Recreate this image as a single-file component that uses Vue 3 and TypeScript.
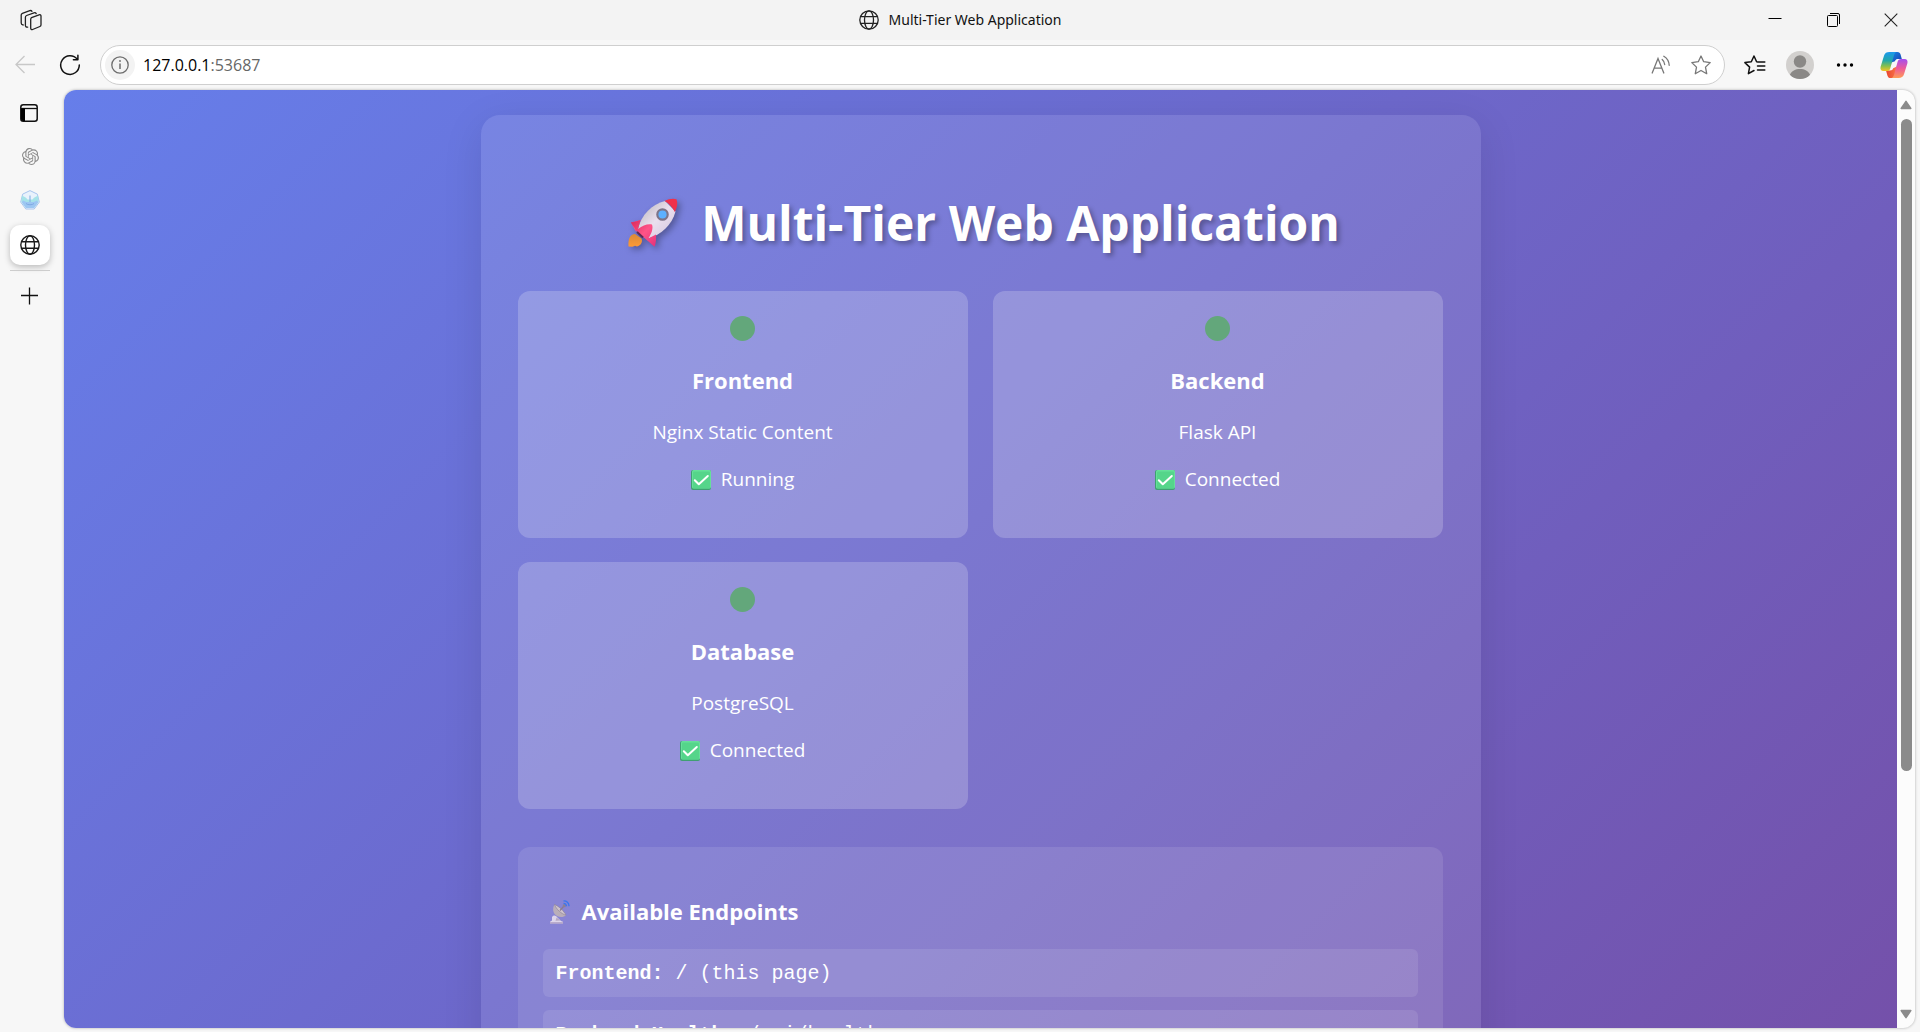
<script setup lang="ts">
interface Service {
  name: string
  tech: string
  status: string
}

interface Endpoint {
  label: string
  path: string
}

const title = 'Multi-Tier Web Application'

const services: Service[] = [
  { name: 'Frontend', tech: 'Nginx Static Content', status: 'Running' },
  { name: 'Backend', tech: 'Flask API', status: 'Connected' },
  { name: 'Database', tech: 'PostgreSQL', status: 'Connected' },
]

const endpoints: Endpoint[] = [
  { label: 'Frontend:', path: '/ (this page)' },
  { label: 'Backend Health:', path: '/api/health' },
]
</script>

<template>
  <div class="window">
    <header class="titlebar">
      <button class="workspaces" aria-label="Workspaces">
        <svg width="22" height="22" viewBox="0 0 22 22" fill="none" stroke="#222" stroke-width="1.3" stroke-linejoin="round" stroke-linecap="round">
          <path d="M11.500 8.700l7.600-2.900c1-.4 1.900.2 1.900 1.200v8.800c0 .8-.4 1.400-1.100 1.700l-7.300 3c-1 .4-1.900-.2-1.900-1.300v-8.600c0-.9.200-1.600.8-1.900z" />
          <path d="M7.700 18.100c-1.300.3-2.300-.3-2.300-1.500V8.300c0-.9.400-1.500 1.200-1.800l7.400-2.700c1-.3 1.800 0 2.200.8" />
          <path d="M3.200 16C2 15.800 1.200 15.100 1.200 14V6.100c0-.9.400-1.500 1.200-1.800l7.400-2.700c1-.3 1.700 0 2.200.7" />
        </svg>
      </button>
      <div class="page-title">
        <svg class="globe" width="20" height="20" viewBox="0 0 20 20" fill="none" stroke="#222" stroke-width="1.300">
          <circle cx="10" cy="10" r="9.200" />
          <ellipse cx="10" cy="10" rx="4.500" ry="9.200" />
          <path d="M1.600 6.700h16.800M1.600 13.300h16.800" />
        </svg>
        <span>{{ title }}</span>
      </div>
      <div class="window-controls">
        <button aria-label="Minimize">
          <svg width="14" height="14" viewBox="0 0 14 14" stroke="#000"><path d="M.5 5.500h13" /></svg>
        </button>
        <button aria-label="Restore">
          <svg width="14" height="14" viewBox="0 0 14 14" fill="none" stroke="#000">
            <rect x="1.500" y="2.500" width="10" height="11" rx="1" />
            <path d="M4 .5h8a1.500 1.500 0 0 1 1.500 1.500V11" />
          </svg>
        </button>
        <button aria-label="Close">
          <svg width="14" height="14" viewBox="0 0 14 14" stroke="#222" stroke-width="1.100"><path d="M.7.7l12.600 12.600M13.300.7L.7 13.300" /></svg>
        </button>
      </div>
    </header>

    <nav class="toolbar" aria-label="Browser toolbar">
      <button class="tool" aria-label="Back" disabled>
        <svg width="20" height="20" viewBox="0 0 20 20" fill="none" stroke="#c8c8c8" stroke-width="1.300"><path d="M20 9.500H1M9.500 1L1 9.500 9.500 18" /></svg>
      </button>
      <button class="tool" aria-label="Refresh">
        <svg width="22" height="22" viewBox="0 0 22 22" fill="none" stroke="#111" stroke-width="1.500" stroke-linecap="round" stroke-linejoin="round">
          <path d="M20.300 11A9.300 9.300 0 1 1 18.300 5.300M18.900 1.300v4.500h-4.500" />
        </svg>
      </button>
      <div class="address">
        <button class="site-info" aria-label="View site information">
          <svg width="18" height="18" viewBox="0 0 18 18" fill="none" stroke="#6d6d6d" stroke-width="1.300">
            <circle cx="9" cy="9" r="8.200" />
            <path d="M9 7.500v5.500" stroke-width="1.500" />
            <circle cx="9" cy="5" r=".9" fill="#6d6d6d" stroke="none" />
          </svg>
        </button>
        <p class="url"><span class="host">127.0.0.1</span>:53687</p>
        <button class="inner" aria-label="Read aloud">
          <svg width="20" height="20" viewBox="0 0 20 20" fill="none" stroke="#777" stroke-width="1.300" stroke-linecap="round">
            <path d="M1.200 18L7 3.500 12.800 18M3.200 13.200h7.600M11.200 4.500c1.500 1.300 2.300 3 2.500 5M12.800 1.300c3.300 2 5.200 5 5.400 9" />
          </svg>
        </button>
        <button class="inner" aria-label="Add to favorites">
          <svg width="20" height="20" viewBox="0 0 20 20" fill="none" stroke="#777" stroke-width="1.300" stroke-linejoin="round">
            <path d="M10 1l2.700 5.700 6.500.9-4.700 4.500 1.200 6.600L10 15.500l-5.700 3.200 1.200-6.600L.8 7.600l6.500-.9z" />
          </svg>
        </button>
      </div>
      <button class="tool first" aria-label="Favorites">
        <svg width="22" height="20" viewBox="0 0 22 20" fill="none" stroke="#111" stroke-width="1.500" stroke-linejoin="round" stroke-linecap="round">
          <path d="M14 6.900l-1.400-.2L10 1 7.300 6.700.9 7.600l4.700 4.500-1.200 6.600 5.600-3.200M13.500 7.100h7.300M13.500 11.100h7.300M13.500 15.100h7.300" />
        </svg>
      </button>
      <button class="tool" aria-label="Profile">
        <svg width="28" height="28" viewBox="0 0 28 28">
          <circle cx="14" cy="14" r="14" fill="#d2d0ce" />
          <circle cx="14" cy="10.500" r="6.200" fill="#8a8886" />
          <path d="M3.900 23.700c1.600-3.700 5.600-5.700 10.100-5.700s8.500 2 10.100 5.700A14 14 0 0 1 14 28a14 14 0 0 1-10.100-4.300z" fill="#8a8886" />
        </svg>
      </button>
      <button class="tool" aria-label="Settings and more">
        <svg width="18" height="4" viewBox="0 0 18 4"><circle cx="2.500" cy="2" r="1.700" /><circle cx="9" cy="2" r="1.700" /><circle cx="15.500" cy="2" r="1.700" /></svg>
      </button>
      <button class="tool last" aria-label="Copilot">
        <svg width="28" height="28" viewBox="0 0 28 28">
          <defs>
            <linearGradient id="cpA" x1="0" y1="0" x2="0" y2="1">
              <stop offset="0" stop-color="#1b98ee" /><stop offset=".45" stop-color="#23a8a8" /><stop offset=".75" stop-color="#8ac04a" /><stop offset="1" stop-color="#f7c325" />
            </linearGradient>
            <linearGradient id="cpB" x1="0" y1="0" x2="0" y2="1">
              <stop offset="0" stop-color="#a44ff0" /><stop offset=".5" stop-color="#ee5b9a" /><stop offset="1" stop-color="#ff9c56" />
            </linearGradient>
            <linearGradient id="cpC" x1="0" y1="0" x2="1" y2="1">
              <stop offset="0" stop-color="#1789e8" /><stop offset="1" stop-color="#1b3fae" />
            </linearGradient>
            <linearGradient id="cpD" x1="0" y1="0" x2="1" y2="0">
              <stop offset="0" stop-color="#e8452e" /><stop offset="1" stop-color="#fb7a4a" />
            </linearGradient>
          </defs>
          <path d="M10 1h7.500c1.700 0 2.600 1 3.100 2.600L21.800 8h-3.600c-1.800 0-2.700.6-3.300 2.200L10 12z" fill="url(#cpC)" />
          <path d="M18 27h-7.500c-1.700 0-2.600-1-3.100-2.600L6 19.500h4c1.800 0 2.700-.6 3.200-2.200L18 15z" fill="url(#cpD)" />
          <path d="M9.500 1h6.700c-1.500 1-2 2.400-2.500 4.300l-3.400 11.900c-.6 1.900-1.600 2.900-3.600 2.900H3.400C1 20.100 0 18.100.6 15.800L4 4.700C4.900 2 6.500 1 9.500 1z" fill="url(#cpA)" />
          <path d="M18.500 27h-6.700c1.500-1 2-2.400 2.500-4.300l3.300-12c.6-1.800 1.600-2.700 3.600-2.700h3.400c2.400 0 3.400 2 2.800 4.300l-3.400 11c-.9 2.700-2.500 3.700-5.500 3.700z" fill="url(#cpB)" />
        </svg>
      </button>
    </nav>

    <div class="body">
      <aside class="tabs" aria-label="Vertical tabs">
        <button class="tab-menu" aria-label="Tab actions menu">
          <svg width="18" height="18" viewBox="0 0 18 18">
            <rect x=".8" y=".8" width="16.400" height="16.400" rx="2.500" fill="none" stroke="#111" stroke-width="1.500" />
            <path d="M1 4.500h16" stroke="#111" stroke-width="1.300" />
            <path d="M1 4.500h4v12.600H3a2 2 0 0 1-2-2z" fill="#000" />
          </svg>
        </button>
        <button class="tab" aria-label="ChatGPT">
          <svg width="17" height="17" viewBox="0 0 24 24" fill="#8b8b8b">
            <path d="M22.280 9.820a5.980 5.980 0 0 0-.52-4.910 6.050 6.050 0 0 0-6.510-2.900A6.070 6.070 0 0 0 4.980 4.180a5.980 5.980 0 0 0-4 2.900 6.050 6.050 0 0 0 .74 7.100 5.980 5.980 0 0 0 .51 4.910 6.050 6.050 0 0 0 6.520 2.900A5.980 5.980 0 0 0 13.260 24a6.060 6.060 0 0 0 5.770-4.210 5.990 5.990 0 0 0 4-2.900 6.060 6.060 0 0 0-.75-7.070zm-9.020 12.610a4.480 4.480 0 0 1-2.880-1.040l.14-.08 4.780-2.760a.8.8 0 0 0 .39-.68v-6.740l2.020 1.170a.07.07 0 0 1 .04.05v5.580a4.500 4.500 0 0 1-4.490 4.500zM3.600 18.300a4.470 4.470 0 0 1-.54-3.010l.14.090 4.780 2.760a.77.77 0 0 0 .78 0l5.840-3.370v2.330a.08.08 0 0 1-.03.06L9.740 19.950a4.500 4.500 0 0 1-6.140-1.650zM2.340 7.900a4.490 4.490 0 0 1 2.370-1.970V11.600a.77.77 0 0 0 .39.680l5.810 3.350-2.020 1.170a.08.08 0 0 1-.07 0l-4.830-2.790A4.500 4.500 0 0 1 2.340 7.870zm16.600 3.860l-5.830-3.390L15.120 7.200a.08.08 0 0 1 .07 0l4.830 2.790a4.490 4.490 0 0 1-.68 8.100v-5.680a.79.79 0 0 0-.4-.65zm2.010-3.020l-.14-.09-4.770-2.780a.78.78 0 0 0-.79 0L9.410 9.230V6.900a.07.07 0 0 1 .03-.06l4.830-2.790a4.500 4.500 0 0 1 6.680 4.660zM8.310 12.860l-2.020-1.160a.08.08 0 0 1-.04-.06V6.070a4.500 4.500 0 0 1 7.380-3.450l-.14.08L8.700 5.460a.8.8 0 0 0-.39.680zm1.100-2.370l2.600-1.500 2.610 1.500v3l-2.600 1.500-2.610-1.500z" />
          </svg>
        </button>
        <button class="tab" aria-label="Kubernetes">
          <svg width="20" height="20" viewBox="0 0 20 20">
            <path d="M10 .6l7.300 3.500 2 8-5.100 6.900H5.800L.7 12.100l2-8z" fill="#e9f2fc" stroke="#a8c4ee" stroke-width="1" stroke-linejoin="round" />
            <path d="M2 5.500l4 2.200 1.500 1.800h5L14 7.700l4-2.200.7 6.300-4.500 6H5.800l-4.500-6z" fill="#a6e3e8" />
            <path d="M3 10.500l3.500 1.500h7l3.500-1.500 1.200 1.800-4.200 5.700H6l-4.200-5.700z" fill="#9cc6f2" />
            <path d="M10 5.500V12M6 13.500c1.500 1.700 6.500 1.700 8 0" fill="none" stroke="#7fa8e2" stroke-width="1" />
          </svg>
        </button>
        <button class="tab active" :aria-label="title">
          <svg class="globe" width="20" height="20" viewBox="0 0 20 20" fill="none" stroke="#1a1a1a" stroke-width="1.400">
            <circle cx="10" cy="10" r="9.200" />
            <ellipse cx="10" cy="10" rx="4.500" ry="9.200" />
            <path d="M1.600 6.700h16.800M1.600 13.300h16.800" />
          </svg>
        </button>
        <hr class="divider" />
        <button class="new-tab" aria-label="New tab">
          <svg width="18" height="18" viewBox="0 0 18 18" stroke="#111" stroke-width="1.300"><path d="M8.500 .5v17M0 8.500h17" /></svg>
        </button>
      </aside>

      <div class="frame">
        <div class="viewport">
          <div class="page">
            <main class="container">
              <h1>
                <svg class="rocket" width="50" height="50" viewBox="0 0 50 50" aria-hidden="true">
                  <defs>
                    <linearGradient id="rkBody" x1="0" y1="0" x2="1" y2="1"><stop offset=".2" stop-color="#c9c4cc" /><stop offset=".5" stop-color="#eadfee" /><stop offset="1" stop-color="#d2c4dc" /></linearGradient>
                    <linearGradient id="rkRed" x1="0" y1="0" x2="1" y2="1"><stop offset="0" stop-color="#d8285a" /><stop offset=".5" stop-color="#ff5487" /><stop offset="1" stop-color="#e5307a" /></linearGradient>
                    <linearGradient id="rkFire" x1="0" y1="0" x2="0" y2="1"><stop offset="0" stop-color="#d98a3a" /><stop offset="1" stop-color="#ff9a35" /></linearGradient>
                  </defs>
                  <path d="M7 36c-5 0-7 5-6.500 12.500l4 .3 2.500-1 2 .8c4-1 6-5 4.500-8.100z" fill="url(#rkFire)" />
                  <path d="M3 24.500l9.500-2.500L8 34z" fill="url(#rkRed)" />
                  <path d="M37 3C24 6 13 17 10 31l10 9.500C33 37 44 27 47.500 13.500z" fill="url(#rkBody)" />
                  <path d="M36.500 3c4.500-2.300 9-3 12-1.700 1.500 3.700.7 8-1.700 12.700C44.500 9 41 5.500 36.500 3z" fill="#f0304a" />
                  <path d="M3 24.500c3-.3 6-1 9.500-2.500L10 31c5-4 10-5.500 14-4.500 1.500 4-.5 9-3.700 14L28 36.500c.3 4.500 0 8.500-1.500 12.300L9 33.500z" fill="url(#rkRed)" />
                  <path d="M9 34l6 5.500" stroke="#5b2a55" stroke-width="2" />
                  <circle cx="34.500" cy="16.500" r="5.200" fill="#5cb0ff" stroke="#7d7488" stroke-width="2.200" />
                </svg>
                <span>{{ title }}</span>
              </h1>

              <section class="services">
                <article v-for="service in services" :key="service.name" class="card">
                  <span class="dot"></span>
                  <h3>{{ service.name }}</h3>
                  <p>{{ service.tech }}</p>
                  <p class="status">
                    <svg width="20" height="20" viewBox="0 0 20 20" aria-hidden="true">
                      <rect width="20" height="20" rx="2" fill="#3f9f72" />
                      <rect x="1" y="0" width="19" height="18.500" rx="1.500" fill="#66e09a" />
                      <rect x="2" y="1.500" width="17" height="17" rx="1" fill="#55d58a" />
                      <path d="M3.800 10.300l4 4L16.800 6" fill="none" stroke="#fff" stroke-width="2" stroke-linecap="round" stroke-linejoin="round" />
                    </svg>
                    <span>{{ service.status }}</span>
                  </p>
                </article>
              </section>

              <section class="endpoints">
                <h3>
                  <svg width="21" height="24" viewBox="0 0 21 24" aria-hidden="true">
                    <path d="M1 23.500v-1.700l2-1.300V17c.8-1.500 2.500-2 4-1l5 5 2 .8v1.700z" fill="#ded6ea" />
                    <path d="M1 22.300h13v1.200H1z" fill="#a999bd" />
                    <path d="M7.500 17.500l4 3-5 .3z" fill="#b5a9c2" />
                    <path d="M5.500 4.500c-2.500 4-1.500 9.500 2.500 11.500 3 1.500 7 1.200 9-.8z" fill="#b9aeb9" />
                    <path d="M5.500 4.500c4 1.500 9.500 6.500 11.500 10.700C12.500 14 7 9 5.500 4.500z" fill="#cfc4cd" stroke="#8a7f90" stroke-width=".6" />
                    <path d="M11 10.500l4-4.500" stroke="#8a7c8f" stroke-width="1.200" />
                    <circle cx="15.300" cy="5.700" r="1.600" fill="#8d7f95" />
                    <path d="M14.500 3.300c1.700 0 2.800 1 3 2.900M14.500.8c3.200 0 5.300 2 5.600 5.400" fill="none" stroke="#3976ee" stroke-width="1.300" />
                  </svg>
                  <span>Available Endpoints</span>
                </h3>
                <div v-for="endpoint in endpoints" :key="endpoint.label" class="endpoint">
                  <strong>{{ endpoint.label }}</strong> {{ endpoint.path }}
                </div>
              </section>
            </main>
          </div>
        </div>
        <div class="scrollbar" aria-hidden="true">
          <svg width="12" height="10" viewBox="0 0 12 10"><path d="M6 1.300L10.800 8.500H1.200z" fill="#8b8b8b" stroke="#8b8b8b" stroke-width="1.500" stroke-linejoin="round" /></svg>
          <div class="track"><div class="thumb"></div></div>
          <svg width="12" height="10" viewBox="0 0 12 10"><path d="M6 8.700L10.800 1.500H1.200z" fill="#8b8b8b" stroke="#8b8b8b" stroke-width="1.500" stroke-linejoin="round" /></svg>
        </div>
      </div>
    </div>
  </div>
</template>

<style>
body {
  margin: 0;
  overflow: hidden;
}
</style>

<style scoped>
.window {
  display: flex;
  flex-direction: column;
  height: 100vh;
  background: #f7f7f7;
  font-family: "Open Sans", "Noto Sans", sans-serif;
  color: #111;
}

button {
  display: flex;
  align-items: center;
  justify-content: center;
  padding: 0;
  border: 0;
  background: none;
}

svg {
  display: block;
  flex: none;
}

.titlebar {
  display: grid;
  grid-template-columns: 1fr auto 1fr;
  align-items: center;
  flex: none;
  height: 40px;
  background: #f3f3f3;
}

.workspaces {
  width: 61px;
  height: 40px;
}

.page-title {
  display: flex;
  align-items: center;
  gap: 10px;
  font-family: "Noto Sans", "Open Sans", sans-serif;
  font-size: 14px;
  line-height: 20px;
}

.window-controls {
  display: flex;
  justify-content: flex-end;
}

.window-controls button {
  width: 58px;
  height: 40px;
}

.toolbar {
  display: flex;
  align-items: center;
  flex: none;
  height: 50px;
  padding-left: 2px;
}

.tool {
  flex: none;
  width: 45px;
  height: 40px;
}

.tool.first {
  margin-left: 7px;
}

.tool.last {
  width: 53px;
}

.address {
  display: flex;
  align-items: center;
  flex: 1;
  box-sizing: border-box;
  height: 40px;
  margin-left: 8px;
  padding: 0 3px 0 4px;
  border: 1px solid #cfcfcf;
  border-radius: 20px;
  background: #fff;
}

.site-info {
  width: 30px;
  height: 30px;
  border-radius: 50%;
  background: #f3f3f3;
}

.url {
  flex: 1;
  margin: 0 0 0 8px;
  font-size: 16px;
  line-height: 24px;
  color: #666;
}

.host {
  color: #000;
}

.inner {
  width: 40px;
  height: 38px;
}

.body {
  display: flex;
  flex: 1;
  min-height: 0;
}

.tabs {
  display: flex;
  flex-direction: column;
  flex: none;
  width: 60px;
  padding-top: 2px;
}

.tab-menu {
  width: 58px;
  height: 42px;
}

.tab {
  height: 44px;
}

.tab.active {
  height: 40px;
  margin: 3px 10px 5px;
  border-radius: 10px;
  background: #fff;
  box-shadow: 0 2px 6px rgba(0, 0, 0, 0.25);
}

.divider {
  width: 40px;
  height: 1px;
  margin: 0 10px;
  border: 0;
  background: #cdcdcd;
}

.new-tab {
  height: 50px;
}

.frame {
  display: flex;
  flex: 1;
  min-width: 0;
  margin: 0 5px 4px 4px;
  overflow: hidden;
  border-radius: 12px;
  background: #fcfcfc;
  box-shadow: 0 0 3px rgba(0, 0, 0, 0.3);
}

.viewport {
  flex: 1;
  min-width: 0;
  overflow: hidden;
}

.page {
  box-sizing: border-box;
  min-height: 136%;
  padding: 25px;
  background: linear-gradient(135deg, #667eea 0%, #764ba2 100%);
  color: #fff;
  font-size: 19px;
  line-height: 27px;
}

.container {
  box-sizing: border-box;
  max-width: 1000px;
  min-height: 1200px;
  margin: 0 auto;
  padding: 37px 38px 37px 37px;
  border-radius: 19px;
  background: rgba(255, 255, 255, 0.1);
  box-shadow: 0 10px 40px rgba(0, 0, 0, 0.1);
}

h1 {
  display: flex;
  justify-content: center;
  align-items: center;
  gap: 23px;
  margin: 37px 0 35px;
  padding-left: 8px;
  font-size: 48px;
  line-height: 67px;
  text-shadow: 3px 3px 5px rgba(0, 0, 0, 0.3);
}

.rocket {
  filter: drop-shadow(3px 3px 3px rgba(0, 0, 0, 0.3));
}

.services {
  display: grid;
  grid-template-columns: 1fr 1fr;
  gap: 24px 25px;
}

.card {
  display: flex;
  flex-direction: column;
  align-items: center;
  padding: 25px;
  border-radius: 12px;
  background: rgba(255, 255, 255, 0.2);
}

.dot {
  width: 25px;
  height: 25px;
  border-radius: 50%;
  background: #63a77b;
}

h3 {
  margin: 24px 0 23px;
  font-size: 22px;
  line-height: 31px;
}

.card p {
  margin: 0 0 20px;
}

.status {
  display: flex;
  align-items: center;
  gap: 10px;
}

.endpoints {
  margin-top: 38px;
  padding: 25px;
  border-radius: 12px;
  background: rgba(255, 255, 255, 0.1);
}

.endpoints h3 {
  display: flex;
  align-items: center;
  gap: 12px;
  margin: 24px 0 22px 6px;
}

.endpoint {
  margin-bottom: 13px;
  padding: 13px 12px 11px 13px;
  border-radius: 6px;
  background: rgba(255, 255, 255, 0.1);
  font-family: "Courier New", "Liberation Mono", monospace;
  font-size: 20px;
  line-height: 24px;
}

.scrollbar {
  display: flex;
  flex-direction: column;
  align-items: center;
  flex: none;
  width: 18px;
  padding: 10px 0 9px;
  box-sizing: border-box;
}

.track {
  flex: 1;
  width: 11px;
  margin: 9px 0;
}

.thumb {
  height: 74%;
  border-radius: 6px;
  background: #8b8b8b;
}
</style>
